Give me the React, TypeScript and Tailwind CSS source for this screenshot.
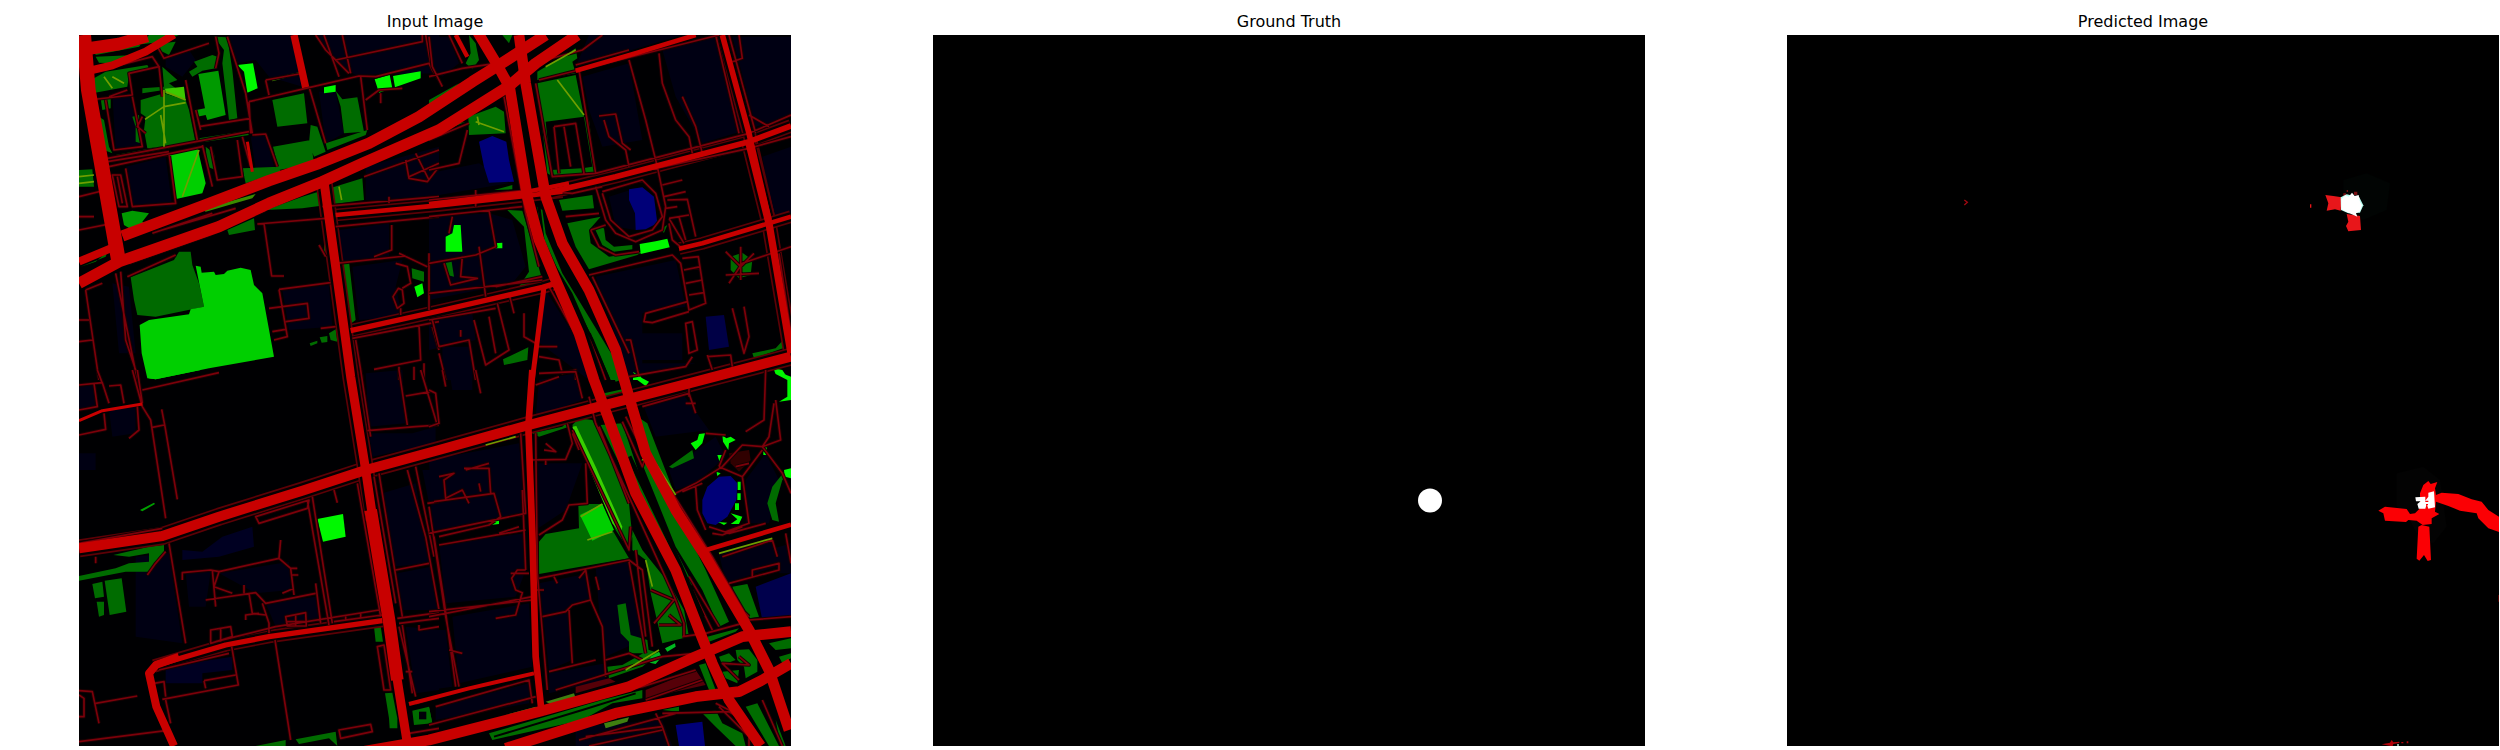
type Shape = [fill: string, d: string];
type Road = [width: number, d: string, edged?: boolean];
type Tile = { x: number; y: number; areas: Shape[]; lanes: string; paths?: string };

const NAVY = "#000013";
const BLUE = "#000078";
const DARK = "#006c00";
const MID = "#009a00";
const LIME = "#00cf00";
const NEON = "#00f800";

const tiles: Tile[] = [
  {
    x: 0,
    y: 0,
    areas: [
      [NAVY, "M480 105L670 105L700 260L600 230L560 180L505 190Z M740 105H1110V220L860 225L800 190Z M290 170L360 150L380 180L340 230L290 200Z M130 280L180 280L220 440L140 450Z M170 500L290 470L310 620L190 620Z M545 410L590 405L615 500L560 505Z M750 275L800 275L825 400L770 430Z M890 500L1110 440V600L890 600Z M810 690L960 670V770L820 785Z M850 800L1000 780L980 860L1000 950L870 960Z M640 870L780 855L790 980L660 990Z M130 850L180 860L200 1060L150 1060Z"],
      [DARK, "M75 150L280 125L330 105L240 105L210 140L80 165Z M80 170L200 165L130 190L90 188Z M65 240L110 215L235 195L240 205L180 225L175 260L70 280Z M280 130L320 125L300 165L270 150Z M360 215L385 200L375 185L430 165L445 170L440 205L400 212L370 230Z M435 110L475 112L490 210L505 355L480 360L460 190L465 150Z M280 200L325 240L300 250L320 265L220 280V265L285 260Z M215 300L285 280L350 300L360 330L380 430L235 445L225 390L230 350L215 340Z M190 350L210 345L215 430L200 425V380Z M95 295L125 292V325L100 330Z M90 350L105 360L120 440L130 460L105 450Z M610 300L705 280L715 370L625 380Z M800 272L820 298L865 292L885 395L825 400L815 320Z M612 440L725 420L735 490L630 510Z M725 375L745 380L770 455L735 470L720 430Z M770 430L895 390L890 405L775 450Z M140 465L300 435V445L145 475Z M390 415L530 393L540 405L410 425Z M410 440L435 460L440 510L415 500Z M520 505L630 500L635 515L530 550Z M30 510L70 508L75 560L30 560Z M590 630L700 590L880 535L885 600L700 625Z M475 690L555 655L558 690L480 705Z M820 790L840 785L860 960L840 975Z M765 710L778 770L765 770Z M1028 805L1065 815V845L1030 835Z M722 1030L745 1022V1030L725 1038Z M752 1012L775 1008V1026L758 1028Z M780 1000L800 988L805 1025L785 1020Z M80 785L115 755L110 770L35 800Z M1110 300L1000 370L900 420L1000 360Z"],
      ["#006a00", "M185 832L315 780L330 755L365 755L370 795L390 850L405 920L260 950L205 945L195 900Z"],
      [MID, "M388 222L448 212L470 345L415 360L410 345L385 350L382 330L408 325Z M158 640L190 632L240 640L220 665L228 675L190 690L165 675Z M205 750L245 740L240 755Z"],
      [LIME, "M298 458L385 442L410 550L400 580L318 598Z M380 797L395 800L398 818L435 815L440 825L465 822L475 812L515 803L545 810L555 855L580 880L615 1070L420 1105L260 1138L235 1135L218 1060L212 975L240 960L360 943L365 928L405 920Z"],
      [NEON, "M505 195L552 190L566 265L535 278L525 215Z M765 262L800 255V275L765 280Z M917 238L962 224L970 265L930 278Z M972 228L1055 214V235L978 262Z M1036 860L1060 850L1065 880L1045 892Z"],
      ["#3cc800", "M288 266L345 260L350 300L290 280Z"],
      ["#3a8b00", "M608 235L690 217V223L610 244Z M400 628L560 582L550 595L410 635Z"],
    ],
    lanes:
      "M55 220L250 170L270 200L180 220L190 285L60 300 M265 140L285 175L420 130 M270 200L280 290 M190 290L220 440L135 450L110 300 M120 290L175 270 M350 240L385 420 M440 110L450 160L440 205 M475 110L530 280L550 400 M100 478L540 395 M120 500L400 440 M115 485L300 455 M170 505L190 620L320 610L300 460 M130 525L155 525L175 620L150 620Z M145 530L160 610 M400 435L430 560 M425 440L445 540L520 530L505 420 M520 410L545 500 M550 405L590 402L625 500 M390 380L545 355 M380 330L395 390 M540 305L710 265L870 228L920 230L1080 190L1090 210L1110 240 M590 240L600 285 M590 240L690 222 M740 105L770 150L805 185L840 220 M820 105L845 220 M765 105L810 230 M800 180L1060 125V105 M1070 105L1085 190 M720 260L770 430 M875 230L895 390 M890 300L930 270L1000 265 M935 280V310 M540 305L545 400 M160 705L460 590L650 525 M180 790L420 705L590 630 M270 660L420 615 M250 700L430 640 M280 690L500 625 M175 830L320 765 M565 672L770 655 M800 680L1110 650 M585 670L608 828L645 828 M760 620L1110 590 M960 590V610 M968 675V750L915 770 M990 760L1075 800 M800 790L1010 768 M980 790L1015 800L1025 850L1000 865 M988 865L972 890L985 925L1005 910L1000 870Z M995 925V945 M1080 760V930 M630 868L785 848 M630 868L655 1010L615 1020 M600 925L715 910L720 955L650 965 M610 995L650 988 M755 985L800 980 M140 820L205 1140 M155 815L170 1020L210 1140 M50 870L90 1140 M50 870L100 850 M30 960H60 M30 1025L70 1020 M850 1015L1110 965 M860 1020L880 1140 M1050 975L1055 1080L915 1108 M1090 980L1110 1050 M990 1100V1140 M1035 1100V1140 M1065 1090V1140 M1010 480L1020 535L1075 545L1110 500 M1020 530L1110 490 M1040 460L1080 540 M885 530L1110 450 M750 735L770 770 M30 690L130 670 M30 650H75 M30 590L110 570 M220 350L205 380L230 400",
    paths: "M285 270V440 M228 358L285 320L350 308 M290 275L350 300 M275 345L290 430 M390 450L340 590 M810 560L818 600 M105 230L130 265 M130 230L165 250 M30 530L75 525 M30 550L75 545",
  },
  {
    x: 1080,
    y: 0,
    areas: [
      [NAVY, "M0 110H60L90 190L40 230L0 180Z M480 105H760L440 200Z M460 230L600 190L640 420L520 440L480 330Z M700 150L860 110L950 390L820 430L740 290Z M910 110H1086V350L980 380Z M0 520L150 490L240 550L0 590Z M0 650L180 640L250 660L290 800L250 850L0 900Z M540 590L620 565L620 690L560 680Z M500 830L740 780L770 920L640 940L640 1090H800L600 1130Z M1000 470L1086 440V640L1030 650Z M0 950L130 940L140 1020L0 1050Z M40 1040H130V1140H40Z M350 870L500 1110L480 1140L320 1020Z M620 1000H760V1080H620Z"],
      [BLUE, "M150 425L190 408L232 425L240 480L255 545L180 548L165 500Z M600 568L640 562L675 590L685 670L650 688L620 690L618 640L600 600Z"],
      ["#000046", "M830 950L885 945L900 1040L840 1050Z"],
      [DARK, "M120 105L140 130L150 180L130 208L110 190L125 160Z M220 105H250L240 130Z M325 215L400 170L440 145L445 175L430 185L440 220L325 240Z M325 250L440 225L465 350L350 365L365 510L460 505L490 500L465 350L480 360L500 520L380 535L355 520Z M118 350L200 320L225 335L230 400L120 405Z M390 600L490 585L495 625L400 632Z M415 670L515 650L480 690L485 730L540 770L640 755L625 765L480 808L440 740Z M235 630L280 632L300 700L340 840L270 860L300 815L285 680Z M495 680L525 685L530 720L555 740L610 735V748L555 755L520 735Z M325 620L340 630L350 700L400 820L540 1050L600 1140H545L430 880L340 730Z M905 770L940 758L970 780L965 825L930 835L905 810Z M222 1078L298 1042L295 1080L225 1095Z M45 790L68 785L75 830L55 825Z M970 1060L1040 1045L1070 1012L1075 1040L975 1075Z M0 340L90 250L0 300Z M0 390L110 365L0 410Z M195 570L250 555V568Z M690 690L715 675L705 698Z"],
      [NEON, "M50 710L70 700L75 675L95 675L100 755L50 755Z M198 730L220 728V745L198 745Z M632 732L680 724L715 716L722 742L635 762Z M612 1125L635 1120V1140H612Z M1035 1105L1060 1110L1070 1125L1040 1120Z"],
    ],
    lanes:
      "M60 105L100 190 M85 105L115 170 M0 110L10 200L40 260 M0 230L100 205L200 190 M350 180L460 150L520 105 M330 240L450 210L870 105 M440 195L600 150 M600 180L650 360L685 500 M690 160L700 250L740 360L780 410L790 460 M760 290L800 380L820 460 M510 348L560 342L580 430L605 450 M525 360L540 410L590 450L600 500 M450 210L500 520 M375 380L440 370L465 520 M375 380L390 520 M405 380L425 500 M320 250L370 530L500 520L960 400L1086 345 M380 570L960 445L1086 410 M860 105L930 400 M900 105L980 400 M930 105L940 175L910 185 M960 345L1020 380 M255 280L300 540 M225 290L290 640L330 800 M120 370L0 420 M115 390L90 490L0 510 M0 600L300 570L430 580L520 560 M0 650L280 620 M140 570V620 M180 630L200 740L140 765L0 790 M70 650L60 700 M150 740L170 890 M45 790L65 855L145 835L95 830L100 770 M500 560L530 660L560 700L620 725L700 690L710 620L685 500 M520 580L545 660L600 710L670 690L700 650L680 580L640 540L520 575 M700 555L760 540 M705 590L770 575 M710 625L745 620 M715 600L775 598L800 710 M720 655L765 730 M750 650L770 720 M720 655L780 645 M720 670L730 720L760 745 M410 650L510 640 M485 690L530 675 M485 690L510 740L560 765L630 755 M480 825L730 765L755 790L780 930L830 910L808 770L760 775 M765 810L815 800 M770 850L820 840 M780 885L825 878 M775 905L650 940L645 965L670 968L780 935 M770 970L790 965L805 1050L780 1060Z M790 1070L770 1100L600 1130 M910 925L945 1060L960 1010L945 920 M835 1065L850 1110 M835 1070L905 1065L910 1100 M890 755L935 800L975 760 M890 825L990 820 M900 850L940 790L1086 740 M935 740V840 M1050 760L1086 1000 M0 960L200 925 M10 960L30 1040L120 1020L140 1140 M30 1060L50 1140 M135 960L170 1095L240 1050L205 910 M180 950L200 1060 M285 940V1010L320 1030 M330 1040H385 M330 1070L390 1080L400 1120L440 1110V1140 M240 880L255 940 M360 860L470 1060L500 1140 M490 830L600 1060 M590 1020H605L630 1130 M200 860L340 830 M480 1000L530 1140 M95 990V1010 M0 880L340 840",
    paths: "M385 240L465 345 M140 365L225 395 M145 350L150 375 M350 200L440 150",
  },
  {
    x: 0,
    y: 1110,
    areas: [
      [NAVY, "M30 50L80 45V110L30 120Z M350 610L425 605L410 710H360Z M450 610L660 575L665 660L560 670Z M200 560L300 550L340 820L200 800Z M940 370L1040 340L1080 580L970 590Z M985 610L1085 590L1110 720L1000 720Z M1010 770L1110 780V960L1040 970Z M590 700L740 680L750 750L620 770Z M120 120L200 110V190L130 200Z M900 190H1030L1100 170V220L910 260Z M890 10L1000 0L1010 160L900 170Z M1060 300H1110V400H1080Z M30 250H80V300H30Z"],
      ["#000022", "M340 540L400 545L460 500L550 470L555 530L450 560L340 570Z M290 890L490 860V900L400 910V940H290Z"],
      [DARK, "M133 555L240 530L285 525V545L255 580L240 605L170 605L30 632V618L140 595L180 580L240 575V550L180 560Z M70 642L100 635L105 680L78 685Z M107 632L158 625L172 725L122 735Z M83 695L105 695V735L90 740Z M915 770L935 768L942 815H920Z M948 970L970 968L985 1045V1075H962L960 1045Z M1030 1022L1080 1010L1090 1060L1035 1065Z M560 1128L650 1110V1128Z M680 1108L800 1085L805 1128L780 1105L690 1122Z"],
      ["#000008", "M1050 1025H1072V1048H1050Z"],
      [LIME, "M232 0H395L260 28L240 25Z"],
      [NEON, "M745 447L822 432L830 500L762 515Z"],
      ["#00a000", "M213 420L255 398L258 402L220 424Z"],
    ],
    lanes:
      "M220 60L450 8 M190 0L220 110L245 150L290 445 M205 0L220 100 M30 45L100 38L120 100 M75 40L85 110L30 120 M85 0L100 40 M120 48L155 45L165 100 M30 195L110 178L105 130 M205 110L210 180L180 205 M278 118L288 170L325 388 M250 172L285 165 M300 520L350 820 M290 545L260 580L235 615 M80 560V580 M30 520L280 475 M730 380L790 760 M715 390L780 765 M560 440L720 390L715 415L570 460Z M795 360L805 398 M865 340L935 740 M930 310L1000 740 M915 320L980 700 M875 0L905 200 M990 0L1015 165 M895 182L1040 170L1110 165 M1055 0L1105 165 M1010 78L1085 65 M1015 300L1070 500L1110 720 M1040 290L1095 560 M1075 400L1110 395 M980 600L1080 580 M340 630V608L425 600L450 605L630 565L635 510 M630 565L665 595L675 675 M430 600L440 710 M450 605L435 650L490 670 M410 690L560 668L590 700L740 670 M580 700L600 760V790 M540 670L550 730L590 735 M530 750V735L570 730 M525 645V670 M665 595H685 M670 615H688 M740 640L755 760 M650 740L710 728L712 768H655Z M680 735V768 M650 755H712 M425 780L485 770L490 800L425 820Z M455 775V815 M440 815L620 770L930 720 M270 900L480 850 M488 830L508 945L280 988 M405 932L500 915 M405 932L410 955 M255 940L285 935L290 980 M290 990L305 1060 M618 810L665 1110 M795 755L940 735 M830 735V750 M875 730V745 M30 962L70 965L90 1060 M80 1000L205 978 M30 975L45 985V1040H30 M30 1115L290 1082 M925 830L945 825L965 960L945 960Z M810 1080L905 1063L910 1085L815 1105Z M990 770L1040 980 M1000 765L1030 970 M1010 905H1030 M985 745L1110 728 M990 760L1110 745 M1050 765V780L1110 770 M1040 1000L1110 980 M640 670L675 655 M1020 1090L1110 1075",
  },
  {
    x: 1080,
    y: 1110,
    areas: [
      [NAVY, "M60 0H130V60H70Z M0 270L270 220L290 430L10 490Z M30 520L290 490V600L260 680L50 700Z M70 740L300 700L310 890L90 940Z M330 30L440 10L460 90L320 140Z M330 640L480 610L490 690L420 710L430 870L360 900Z M500 590L600 570L640 810L530 860L510 720Z M720 300L860 200L890 260L800 340L740 360Z M640 100L760 70L840 180L680 200Z M950 330L1010 250L1050 330L1020 460L950 460Z M870 550L1030 510L1040 590L890 640Z M320 280L460 280L410 420L320 480Z M0 780H50L70 950L0 960Z M20 1010L300 940V1000L20 1050Z M1020 540L1086 520V610H1050Z M440 1070L700 1050L730 1128H440Z M360 910L530 880V930L360 970Z"],
      [BLUE, "M820 390L835 350L870 320L905 318L925 340L922 390L895 440L860 465L835 460L820 430Z M740 1065L820 1055L828 1128H750Z"],
      ["#00004c", "M980 650L1086 610V740L1000 750Z"],
      [DARK, "M430 165L450 145L490 150L540 250L600 400L610 500L600 540L560 480Z M310 190L400 170L420 150V170L330 200Z M448 402H520L550 480L600 565L330 612V515L350 492L450 475Z M515 165L580 160L650 370L720 500L790 640L780 660L700 540L600 340Z M545 0H580L590 25L560 35Z M525 70L580 58V75L530 85Z M635 270L660 260L830 600L900 755L870 770L820 660L740 530Z M625 140L655 160L740 380L720 370L660 250Z M610 480L640 540L720 640L765 720L780 800L700 820L665 670L650 570L610 540Z M565 705L590 700L605 795L655 810L660 850L600 850L600 815L575 790Z M535 890L580 885L660 840L690 850L640 890L540 925Z M720 290L790 240L795 265L730 295Z M1086 310L1060 330L1040 400L1050 455L1030 450L1015 400L1030 350L1070 300Z M910 650L955 642L990 740L960 745L925 700Z M835 800L930 775L920 785L840 815Z M1020 820L1086 805V835L1040 840Z M1050 860L1086 850V865L1060 880Z M870 860L900 850L920 870L880 885Z M920 840L960 838L985 870V905L950 925L945 890L925 870Z M880 905L930 900L925 940L890 925Z M810 885L830 880L860 960L840 960Z M180 1090L520 990L640 960V985L550 1000L460 1050L190 1110Z M950 1010L985 1000L1050 1128H1020Z M0 1010L10 1060H0Z M820 1030L860 1020L880 1060L940 1090L950 1128H920L860 1070Z M700 1020L750 1010V1025Z M1040 1050L1070 1128H1055Z"],
      [LIME, "M453 435L520 402L555 480L490 512L475 480Z"],
      ["#38d000", "M430 170L442 168L500 290L580 470L575 492L550 460L440 200Z"],
      [NEON, "M178 452L210 448V462L178 466Z M785 220L805 210L810 192L828 190L820 220L800 240Z M880 195L892 205L905 200L920 210L900 220L898 240L882 215Z M865 255H885L875 285Z M862 305L875 310L865 318Z M926 335H935V360H926Z M925 370H935V390H925Z M918 400H930V420H918Z M905 430L940 440L930 462H905L925 448Z M868 456L895 458L885 465Z M1003 232H1013V255H1003Z M1065 300L1086 295V325L1068 320Z M1035 0L1055 8L1086 20V90L1050 95L1075 80V30L1040 12Z M612 5L640 25L660 35L650 48L625 30Z"],
      ["#00b820", "M665 860L690 845L698 860L680 882L662 878Z M708 835L738 820L740 830L715 845Z"],
      ["#3f7f10", "M350 995L435 970L440 985L370 1005Z M525 1060L600 1042L595 1055L530 1075Z M230 1035L320 1010V1020Z"],
      ["#300000", "M900 250L960 240L965 270L930 305L905 280Z"],
      ["#560008", "M440 950L540 925L560 935L440 970Z M650 960L800 900L830 945L650 985Z"],
    ],
    lanes:
      "M0 60L20 70L30 160L0 170 M40 0L50 50 M140 0L155 70 M330 10L440 5L460 85 M320 45L390 20 M480 80L500 160L600 380L740 690L765 760V800 M510 170L600 400 M415 160L430 220L410 268L300 270 M430 190L450 240 M350 220L380 245L345 240 M350 270V285 M470 280L475 400L420 405L400 450L330 495 M430 180L600 540L605 470 M275 190L290 430L0 490 M15 395L195 370L215 440L180 465L30 500 M30 320L75 310L45 330L50 385L100 360L120 400 M105 295H180L185 370 M150 340L155 365 M110 300L180 280 M30 525L290 480 M210 490L270 470 M0 410L50 740L90 950 M15 500L45 690L80 950 M0 740L310 680 M0 725L310 690 M245 610H300 M290 600H265L248 625L260 660L280 668L270 700 M200 745L260 735L270 700 M280 360L290 600 M320 190L325 610L355 960 M330 625L600 570L640 600L670 830 M600 575L650 850 M340 740L410 725L430 705L485 690L470 600L450 625 M420 720L430 880 M485 690L520 770L530 920 M500 620L510 660 M375 620L385 640 M360 905L500 870 M310 660H345 M620 540L650 800 M665 660L735 690L675 760 M690 765H755L720 735 M530 870L600 850L640 870 M580 155L640 290L650 260 M590 140L720 400L830 540 M610 130L650 240L850 560L960 750L1086 740 M780 620L870 770 M790 660L850 780 M640 110L780 70L800 130 M770 100H800 M780 55V80 M1010 0L1005 150L950 185 M1040 90L1055 210L1000 230L940 225L880 290L800 340L740 370 M1035 100L1020 200L1000 230L1060 310L1086 370 M870 290L940 320L1000 240 M940 320L960 460L890 485 M890 240L870 290 M800 350L805 420L830 480 M830 190L890 195 M840 470L900 490L1010 460 M920 290L960 280 M850 490L880 495L940 470 M840 560L880 660L960 740 M880 560L1030 510 M900 640L1050 600V580L970 600V620 M1030 510L1045 560 M1070 490L1086 580 M760 365L820 340 M760 800L830 790L940 760 M60 840L100 850 M650 990L820 930 M700 1030L900 1025L960 1060 M680 1030L700 1070L470 1100 M450 1110L740 1030 M700 1070L720 1128 M20 1010L300 930L310 1000 M0 1065L320 980 M380 960L700 860L800 850 M440 990L640 950L800 900 M480 1128L700 1080 M860 1000L940 1040 M960 800L1086 790 M1000 990L1060 1128 M870 1010L960 1100V1128 M930 860L960 885L880 880L930 930",
    paths: "M455 440L520 402 M475 510L550 485 M680 280L740 375 M590 900L690 840 M870 550L1030 505 M640 270L660 260 M650 570L670 650 M170 225L260 200",
  },
];

const roads: Road[] = [
  [38, "M30 150L150 132L235 108"],
  [24, "M36 218L130 196L230 155L315 104"],
  [22, "M675 105L710 262"],
  [13, "M1160 105L1195 170"],
  [9, "M535 425L550 515"],
  [24, "M30 785L125 745"],
  [14, "M800 645L1110 616L1350 590L1480 575", true],
  [13, "M1080 612L1360 578L1500 550"],
  [17, "M1430 580L1640 530L2040 425L2166 378", true],
  [14, "M1520 212L1700 160L1880 105"],
  [17, "M1960 105L2040 400L2100 660", true],
  [22, "M2040 430L2100 670L2166 1060", true],
  [14, "M1830 746L1900 730L2166 650", true],
  [16, "M845 992L1110 933L1420 862L1460 850", true],
  [15, "M1425 860L1390 1140"],
  [20, "M1390 1110L1378 1280L1390 1600L1400 1970L1416 2120"],
  [14, "M1904 1652L2166 1574"],
  [9, "M30 1262L100 1232L220 1212"],
  [12, "M1020 2112L1200 2065L1395 2020"],
  [24, "M315 2238L262 2120L240 2020L262 1994L330 1970"],
  [16, "M255 1998L470 1935L600 1910L940 1862", true],
  [30, "M30 1645L280 1608L450 1550L700 1472L890 1410L1110 1350L1380 1275L1590 1220L1860 1150L2166 1070", true],
  [27, "M765 545L800 800L845 1130L890 1410L912 1560", true],
  [38, "M905 1530L960 1860L985 2040"],
  [27, "M980 2010L1015 2230"],
  [34, "M160 708L400 618L600 542L750 490L900 430L1050 350L1210 245L1290 195L1430 105"],
  [34, "M30 850L150 785L450 680L600 610L760 545L880 490L1110 390L1320 258L1400 190L1525 105"],
  [44, "M44 105L58 270L90 450L150 790"],
  [32, "M1225 95L1285 195L1322 262L1375 590L1410 720L1460 840L1530 1000L1575 1140L1620 1260L1700 1480L1820 1710L1890 1890L1930 1990L1980 2100L2075 2238"],
  [32, "M1350 105L1370 250L1430 590L1480 730L1560 870L1640 1050L1680 1190L1730 1360L1820 1530L1910 1670L2040 1890L2100 2010L2160 2190"],
  [32, "M850 2260L1080 2220L1410 2135L1680 2060L1880 1970L2020 1910L2166 1895"],
  [32, "M1310 2245L1640 2140L1880 2090L2010 2075L2080 2040L2166 1990"],
];

const medians: Road[] = [
  [9, "M1410 620L1422 720L1480 850L1570 1020L1620 1140"],
  [15, "M1680 1370L1800 1620L1900 1850"],
  [6, "M1275 2210L1540 2130L1700 2080"],
  [20, "M1342 280L1395 590"],
  [10, "M640 585L760 530L900 470L1100 365"],
];

function CityMap() {
  return (
    <svg
      viewBox="30 105 2136 2133"
      preserveAspectRatio="none"
      role="img"
      aria-label="Input Image"
      className="block h-full w-full"
    >
      <rect x="30" y="105" width="2136" height="2133" fill="#000002" />
      {tiles.map((t) => (
        <g key={`${t.x}-${t.y}`} transform={`translate(${t.x} ${t.y})`}>
          {t.areas.map(([fill, d], i) => (
            <path key={i} d={d} fill={fill} />
          ))}
        </g>
      ))}
      <g fill="none" strokeLinejoin="round">
        {roads
          .filter((r) => r[2])
          .map(([w, d], i) => (
            <g key={i}>
              <path d={d} stroke="#5c0006" strokeWidth={w + 24} />
              <path d={d} stroke="#060002" strokeWidth={w + 14} />
            </g>
          ))}
        {tiles.map((t) => (
          <g key={`${t.x}-${t.y}`} transform={`translate(${t.x} ${t.y})`}>
            <path d={t.lanes} stroke="#180003" strokeWidth={11} />
            <path d={t.lanes} stroke="#7c000a" strokeWidth={5} />
            {t.paths && <path d={t.paths} stroke="#6f9f00" strokeWidth={5} />}
          </g>
        ))}
        {medians.map(([w, d], i) => (
          <path key={i} d={d} stroke="#000200" strokeWidth={w} />
        ))}
        {roads.map(([w, d], i) => (
          <path key={i} d={d} stroke="#c80000" strokeWidth={w} />
        ))}
      </g>
    </svg>
  );
}

function TruthMask() {
  return (
    <svg viewBox="0 0 712 711" preserveAspectRatio="none" role="img" aria-label="Ground Truth" className="block h-full w-full">
      <rect width="712" height="711" fill="#000" />
      <circle cx="497" cy="465.500" r="12" fill="#fff" />
    </svg>
  );
}

function Prediction() {
  return (
    <svg
      viewBox="5361 105 2136 2133"
      preserveAspectRatio="none"
      role="img"
      aria-label="Predicted Image"
      className="block h-full w-full"
    >
      <rect x="5361" y="105" width="2136" height="2133" fill="#000" />
      <g transform="translate(6840 420)">
        <path fill="#010403" d="M190 120L260 100L330 130L320 210L250 240L190 220Z" />
        <path fill="#e8161a" d="M136 165L160 168L185 172L182 212L165 208L140 212L145 190Z M200 222L240 228L243 270L205 274L198 258L205 245Z M90 193H94V203H90Z" />
        <path fill="#7a1014" d="M190 160H198V170H190Z M222 155H232V165H222Z M200 150H204V156H200Z" />
        <path fill="#b8fff2" d="M182 172L200 163L238 172L250 196L240 218L205 220L183 210Z" />
        <path fill="#fff" d="M184 178L196 166L206 170L216 158L224 168L236 165L240 185L246 196L240 214L228 220L232 230L222 226L200 216L184 208Z" />
      </g>
      <g transform="translate(7080 1380)">
        <path fill="#030303" d="M110 40L190 20L240 60L260 200L220 250L180 240L150 180L110 140Z" />
        <path fill="#fb0004" d="M190 75L205 63L212 72L232 66L225 85L228 105L245 98L295 102L335 118L365 125L385 150L417 170V216L385 205L355 175L350 160L300 152L265 138L228 125L225 155L238 162L215 175V192L188 195L170 182L145 180L138 186L75 182L70 160L55 152L75 140L140 147L150 162L165 160L180 145L180 100Z M175 200L185 195L208 200L213 300L203 303L192 285L178 302L170 296Z" />
        <path fill="#fff" d="M166 112L196 110V122L205 110V98L222 94L225 142L205 146L200 132L196 146H176L172 132L182 124H168Z" />
        <path fill="#fb0004" d="M196 122H205V126H196Z M198 132H204V136H198Z" />
      </g>
      <g transform="translate(7080 2100)">
        <path fill="#b00008" d="M65 133L90 128L95 120L100 127L118 125V129L100 132L98 138H92Z M124 126H130V130H124Z M140 124H145V130H140Z" />
        <path fill="#8aa89a" d="M111 132H117V138H111Z" />
      </g>
      <path fill="none" stroke="#a00810" strokeWidth="4" d="M5893 600L5902 607L5893 615" />
      <path fill="#500" d="M7494 1785H7497V1805H7494Z" />
    </svg>
  );
}

const panels = [
  { title: "Input Image", Plot: CityMap },
  { title: "Ground Truth", Plot: TruthMask },
  { title: "Predicted Image", Plot: Prediction },
];

export default function App() {
  return (
    <main className="grid grid-cols-3 gap-x-[142px] bg-white pt-3 pr-px pb-1 pl-[79px] font-['DejaVu_Sans',sans-serif]">
      {panels.map(({ title, Plot }) => (
        <figure key={title} className="flex flex-col gap-[3px]">
          <figcaption className="text-center text-base leading-5 text-black">{title}</figcaption>
          <div className="aspect-[712/711] w-full">
            <Plot />
          </div>
        </figure>
      ))}
    </main>
  );
}
